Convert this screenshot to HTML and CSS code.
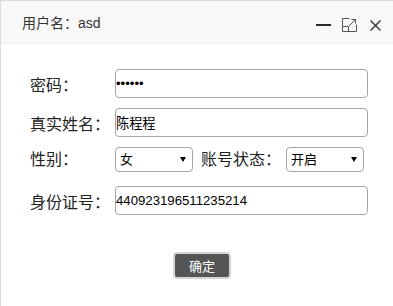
FILE: index.html
```html
<!DOCTYPE html>
<html lang="zh-CN">
<head>
<meta charset="utf-8">
<title>用户信息</title>
<link rel="stylesheet" href="styles.css">
</head>
<body>
<div class="dialog">
  <div class="title">
    <span class="title-text">用户名：asd</span>
    <svg class="win-tools" width="66" height="14" viewBox="0 0 66 14" aria-hidden="true">
      <rect x="0" y="6" width="15" height="2" fill="#2b2b2b"/>
      <path d="M33.5 0.5 H26.5 V13.5 H40.5 V6.5" fill="none" stroke="#555" stroke-width="1"/>
      <path d="M26.5 8.5 H32.5 V13.5" fill="none" stroke="#555" stroke-width="1"/>
      <path d="M32.5 8.5 L39.5 1.5" fill="none" stroke="#555" stroke-width="1"/>
      <path d="M35.5 1.5 H39.5 V5.5" fill="none" stroke="#555" stroke-width="1"/>
      <path d="M54.5 2.5 L64.5 12.5 M64.5 2.5 L54.5 12.5" fill="none" stroke="#333" stroke-width="1.4"/>
    </svg>
  </div>
  <form class="content">
    <div class="row">
      <label class="label">密码：</label>
      <input class="input" type="password" value="123456">
    </div>
    <div class="row">
      <label class="label">真实姓名：</label>
      <input class="input" type="text" value="陈程程">
    </div>
    <div class="row row-selects">
      <label class="label">性别：</label>
      <span class="select-wrap">
        <select class="select"><option>女</option><option>男</option></select>
      </span>
      <label class="label label-second">账号状态：</label>
      <span class="select-wrap">
        <select class="select"><option>开启</option><option>关闭</option></select>
      </span>
    </div>
    <div class="row">
      <label class="label">身份证号：</label>
      <input class="input" type="text" value="440923196511235214">
    </div>
    <div class="actions">
      <button class="btn" type="button">确定</button>
    </div>
  </form>
</div>
</body>
</html>
```

FILE: styles.css
```css
html, body {
  margin: 0;
  padding: 0;
  background: #fff;
  overflow: hidden;
}

.dialog {
  width: 402px;
  height: 320px;
  border-top: 1px solid #dcdcdc;
  border-left: 1px solid #dcdcdc;
  background: #fff;
  font-family: "Liberation Sans", "Noto Sans CJK SC", sans-serif;
}

.title {
  height: 42px;
  display: flex;
  align-items: center;
  padding: 0 21px;
  background: #f8f8f8;
  border-bottom: 1px solid #eee;
  font-size: 14px;
  color: #333;
}

.title-text {
  flex: 1;
}

.win-tools {
  display: block;
  margin-top: 6px;
}

.content {
  margin: 0;
  padding: 25px 0 0 29px;
}

.row {
  display: flex;
  align-items: center;
  height: 29px;
  margin-bottom: 10px;
}

.row-selects {
  align-items: flex-start;
}

.row-selects .label {
  line-height: 25px;
}

.label {
  width: 85px;
  flex: none;
  font-size: 16px;
  color: #222;
}

.label-second {
  margin-left: 8px;
}

.input {
  width: 253px;
  height: 29px;
  box-sizing: border-box;
  margin: 0;
  padding: 0 1px 0 0;
  border: 1px solid #a6a6a6;
  border-radius: 4px;
  font-family: "Liberation Sans", "Noto Sans CJK SC", sans-serif;
  font-size: 13.2px;
  color: #000;
  background: #fff;
  outline: none;
}

.select-wrap {
  position: relative;
  display: block;
}

.select-wrap::after {
  content: "";
  position: absolute;
  right: 7px;
  top: 10px;
  border-left: 3px solid transparent;
  border-right: 3px solid transparent;
  border-top: 5px solid #000;
  pointer-events: none;
}

.select {
  display: block;
  width: 78px;
  height: 25px;
  box-sizing: border-box;
  margin: 0;
  padding: 0 0 0 4px;
  border: 1px solid #a6a6a6;
  border-radius: 4px;
  background: #fff;
  -webkit-appearance: none;
  appearance: none;
  font-family: "Liberation Sans", "Noto Sans CJK SC", sans-serif;
  font-size: 13px;
  color: #000;
  outline: none;
}

.actions {
  width: 344px;
  display: flex;
  justify-content: center;
  padding-top: 27px;
}

.btn {
  width: 58px;
  height: 27px;
  box-sizing: border-box;
  margin: 0;
  padding: 0;
  border: 2px solid #d4d4d4;
  border-radius: 4px;
  background: #555;
  color: #fff;
  font-family: "Liberation Sans", "Noto Sans CJK SC", sans-serif;
  font-size: 13px;
}
```
